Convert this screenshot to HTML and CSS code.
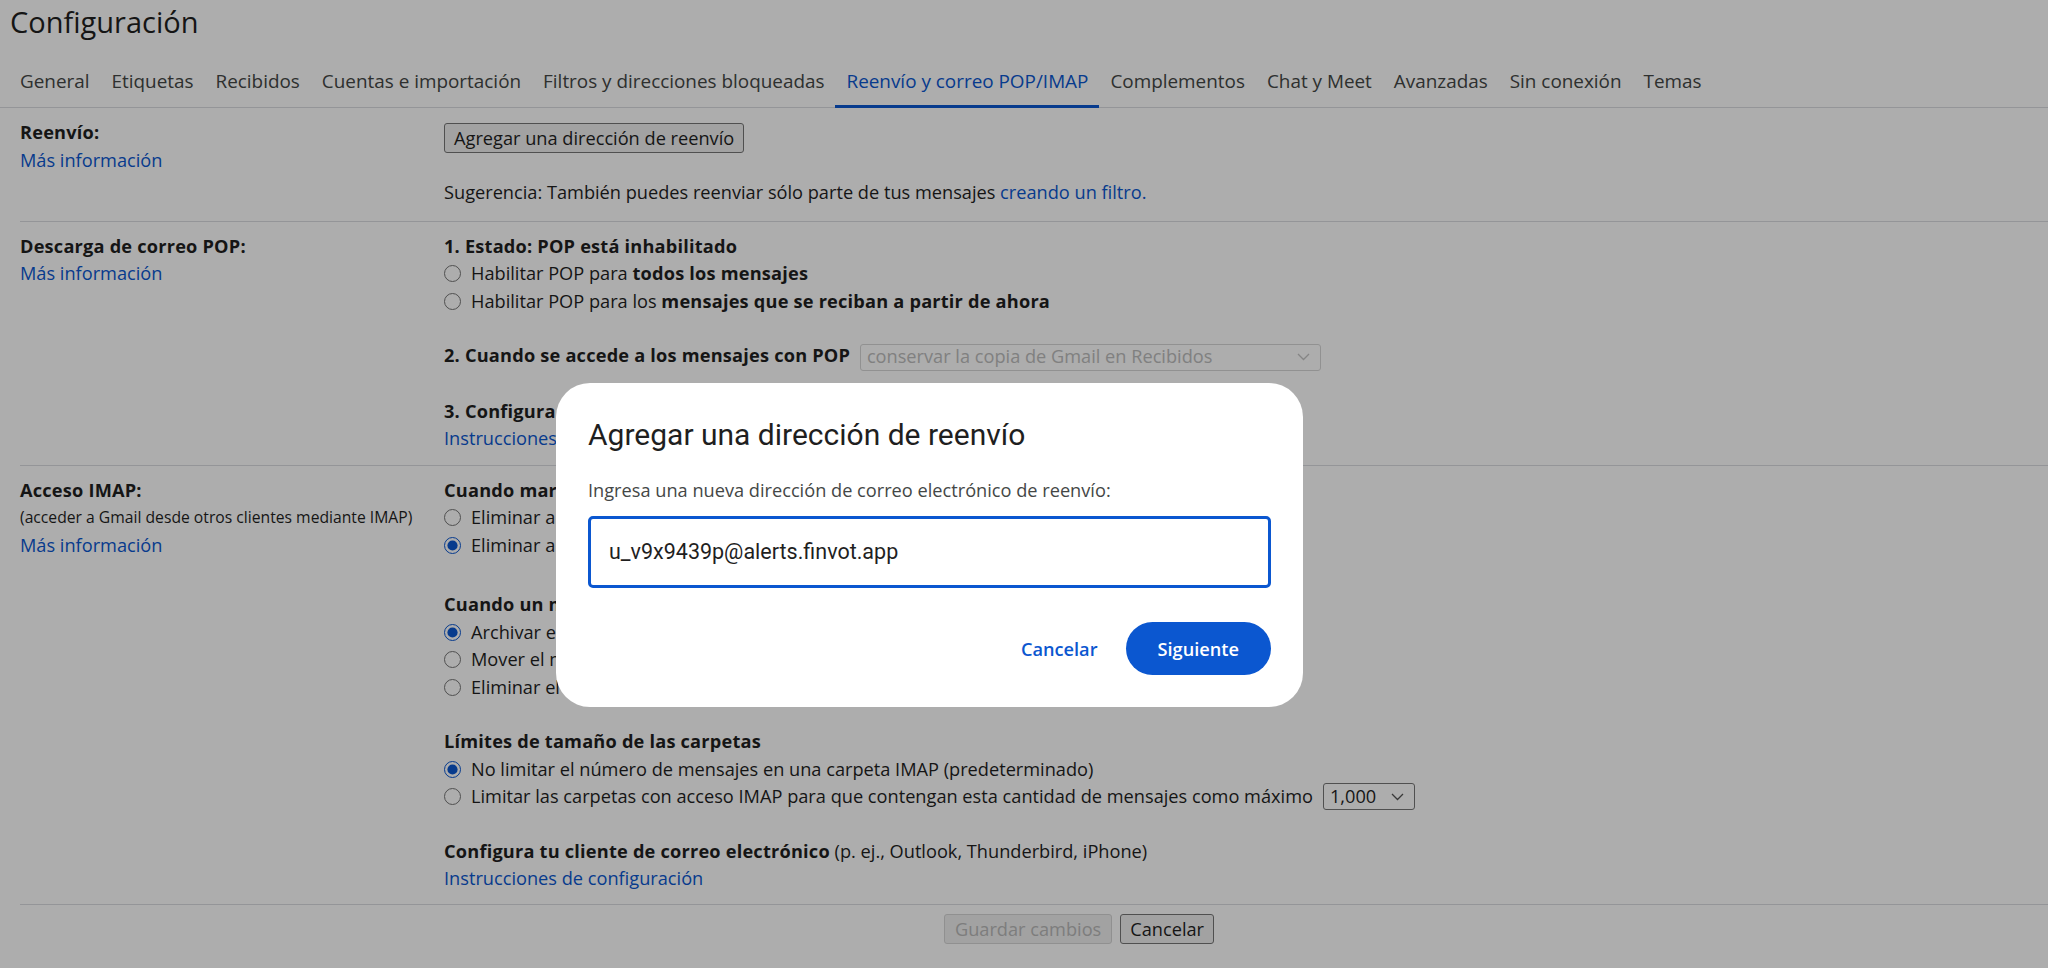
FILE: index.html
```html
<!DOCTYPE html>
<html lang="es">
<head>
    <meta charset="UTF-8">
    <meta name="viewport" content="width=device-width, initial-scale=1.0">
    <title>Configuración - Reenvío y correo POP/IMAP</title>
    <link rel="stylesheet" href="styles.css">
</head>
<body>
    <div class="page">
        <h1 class="title">Configuración</h1>

        <nav class="tabs">
            <a class="tab">General</a>
            <a class="tab">Etiquetas</a>
            <a class="tab">Recibidos</a>
            <a class="tab">Cuentas e importación</a>
            <a class="tab">Filtros y direcciones bloqueadas</a>
            <a class="tab active">Reenvío y correo POP/IMAP</a>
            <a class="tab">Complementos</a>
            <a class="tab">Chat y Meet</a>
            <a class="tab">Avanzadas</a>
            <a class="tab">Sin conexión</a>
            <a class="tab">Temas</a>
        </nav>

        <!-- Reenvio -->
        <div class="row">
            <div class="label">
                <div class="label-title">Reenvío:</div>
                <a class="link">Más información</a>
            </div>
            <div class="content">
                <div class="btn-line"><button class="btn">Agregar una dirección de reenvío</button></div>
                <div class="hint">Sugerencia: También puedes reenviar sólo parte de tus mensajes <a class="link">creando un filtro.</a></div>
            </div>
        </div>

        <!-- POP -->
        <div class="row pop">
            <div class="label">
                <div class="label-title">Descarga de correo POP:</div>
                <a class="link">Más información</a>
            </div>
            <div class="content">
                <div class="group">
                    <div class="heading">1. Estado: POP está inhabilitado</div>
                    <label class="opt"><input type="radio" name="pop">Habilitar POP para&nbsp;<b>todos los mensajes</b></label>
                    <label class="opt"><input type="radio" name="pop">Habilitar POP para los&nbsp;<b>mensajes que se reciban a partir de ahora</b></label>
                </div>
                <div class="group">
                    <span class="heading">2. Cuando se accede a los mensajes con POP</span>
                    <span class="select disabled">conservar la copia de Gmail en Recibidos
                        <svg class="chev" width="13" height="8" viewBox="0 0 13 8"><path d="M1 1l5.5 5.5L12 1" fill="none" stroke="currentColor" stroke-width="1.3"/></svg>
                    </span>
                </div>
                <div class="group">
                    <div><span class="heading">3. Configura tu cliente de correo</span> (p. ej., Outlook, Eudora)</div>
                    <a class="link">Instrucciones de configuración</a>
                </div>
            </div>
        </div>

        <!-- IMAP -->
        <div class="row imap">
            <div class="label">
                <div class="label-title">Acceso IMAP:</div>
                <div class="small">(acceder a Gmail desde otros clientes mediante IMAP)</div>
                <a class="link">Más información</a>
            </div>
            <div class="content">
                <div class="group">
                    <div class="heading">Cuando marco un mensaje como eliminado en IMAP:</div>
                    <label class="opt"><input type="radio" name="exp">Eliminar automáticamente desactivado: esperar al cliente</label>
                    <label class="opt"><input type="radio" name="exp" checked>Eliminar automáticamente activado: actualizar el servidor</label>
                </div>
                <div class="group wide-gap">
                    <div class="heading">Cuando un mensaje se marca como eliminado en IMAP:</div>
                    <label class="opt"><input type="radio" name="del" checked>Archivar el mensaje (predeterminado)</label>
                    <label class="opt"><input type="radio" name="del">Mover el mensaje a la papelera</label>
                    <label class="opt"><input type="radio" name="del">Eliminar el mensaje definitivamente</label>
                </div>
                <div class="group">
                    <div class="heading">Límites de tamaño de las carpetas</div>
                    <label class="opt"><input type="radio" name="lim" checked>No limitar el número de mensajes en una carpeta IMAP (predeterminado)</label>
                    <label class="opt"><input type="radio" name="lim">Limitar las carpetas con acceso IMAP para que contengan esta cantidad de mensajes como máximo
                        <span class="select small-select">1,000
                            <svg class="chev" width="13" height="8" viewBox="0 0 13 8"><path d="M1 1l5.5 5.5L12 1" fill="none" stroke="currentColor" stroke-width="1.3"/></svg>
                        </span>
                    </label>
                </div>
                <div class="group">
                    <div><span class="heading">Configura tu cliente de correo electrónico</span> (p. ej., Outlook, Thunderbird, iPhone)</div>
                    <a class="link">Instrucciones de configuración</a>
                </div>
            </div>
        </div>

        <div class="footer">
            <button class="btn" disabled>Guardar cambios</button>
            <button class="btn">Cancelar</button>
        </div>
    </div>

    <div class="scrim"></div>

    <div class="dialog">
        <h2 class="dialog-title">Agregar una dirección de reenvío</h2>
        <p class="dialog-text">Ingresa una nueva dirección de correo electrónico de reenvío:</p>
        <div class="field">u_v9x9439p@alerts.finvot.app</div>
        <div class="dialog-actions">
            <button class="text-btn">Cancelar</button>
            <button class="filled-btn">Siguiente</button>
        </div>
    </div>
</body>
</html>
```

FILE: styles.css
```css
body {
    margin: 0;
    background: #fff;
    color: #1f1f1f;
    font-family: "Open Sans", Roboto, "Liberation Sans", sans-serif;
    font-size: 18.2px;
    line-height: 27.5px;
}

.title {
    margin: 0;
    padding: 4px 0 0 10px;
    font-size: 29px;
    line-height: 36px;
    font-weight: 400;
}

.tabs {
    display: flex;
    margin-top: 20px;
    padding-left: 9px;
    border-bottom: 1px solid #dadce0;
}

.tab {
    padding: 9px 11px 12px;
    font-size: 18.9px;
    line-height: 24px;
    color: #444746;
    border-bottom: 3px solid transparent;
    margin-bottom: -1px;
}

.tab.active {
    color: #0b57d0;
    border-bottom-color: #0b57d0;
}

.link {
    color: #0b57d0;
}

.row {
    display: flex;
    margin-left: 20px;
    padding: 11px 0 14px;
    border-bottom: 1px solid #dadce0;
}

.row.pop {
    padding-bottom: 12px;
}

.row.imap {
    padding-bottom: 11px;
}

.label {
    width: 424px;
    flex: none;
}

.label-title,
.heading,
b {
    font-weight: 700;
    letter-spacing: 0.2px;
}

.label .link {
    display: block;
}

.small {
    font-size: 15.7px;
}

.content {
    display: flex;
    flex-direction: column;
}

.btn-line {
    margin-top: 4px;
    line-height: 0;
}

.hint {
    margin-top: 26px;
}

.group + .group {
    margin-top: 27px;
}

.group.wide-gap {
    margin-top: 32px;
}

.group .link {
    display: block;
}

.opt {
    display: flex;
    align-items: center;
}

.opt input {
    width: 17px;
    height: 17px;
    margin: 0 10px 0 0;
    accent-color: #0b57d0;
}

.btn {
    height: 30px;
    padding: 0 9px;
    font-family: inherit;
    font-size: 18.2px;
    color: #1f1f1f;
    background: #efefef;
    border: 1px solid #767676;
    border-radius: 3px;
}

.btn:disabled {
    padding: 0 10px;
    color: #b9b9b9;
    border-color: #d4d4d4;
}

.select {
    display: inline-flex;
    align-items: center;
    justify-content: space-between;
    box-sizing: border-box;
    height: 27px;
    border-radius: 3px;
    vertical-align: middle;
}

.select.disabled {
    width: 461px;
    margin-left: 5px;
    padding: 0 10px 0 6px;
    color: #bdbdbd;
    border: 1px solid #d6d6d6;
}

.select.disabled .chev {
    color: #c4c4c4;
}

.small-select {
    width: 92px;
    margin-left: 10px;
    padding: 0 10px 0 6px;
    border: 1px solid #767676;
}

.small-select .chev {
    color: #555;
}

.footer {
    display: flex;
    justify-content: center;
    gap: 8px;
    padding: 9px 0 0 110px;
}

.scrim {
    position: fixed;
    inset: 0;
    background: rgba(0, 0, 0, 0.32);
}

.dialog {
    position: fixed;
    left: 556px;
    top: 383px;
    width: 747px;
    box-sizing: border-box;
    padding: 32px;
    background: #fff;
    border-radius: 34px;
}

.dialog-title {
    margin: 0;
    font-family: Roboto, "Open Sans", sans-serif;
    font-size: 30px;
    line-height: 40px;
    font-weight: 400;
    color: #1f1f1f;
}

.dialog-text {
    margin: 23px 0 0;
    line-height: 25px;
    color: #444746;
}

.field {
    display: flex;
    align-items: center;
    box-sizing: border-box;
    height: 72px;
    margin-top: 13px;
    padding: 0 18px;
    border: 3px solid #0b57d0;
    border-radius: 5px;
    font-family: Roboto, "Open Sans", sans-serif;
    font-size: 21.5px;
    color: #1f1f1f;
}

.dialog-actions {
    display: flex;
    justify-content: flex-end;
    gap: 8px;
    margin-top: 34px;
}

.text-btn,
.filled-btn {
    height: 53px;
    border: 0;
    font-family: inherit;
    font-size: 18.2px;
    font-weight: 600;
}

.text-btn {
    padding: 0 20px;
    background: none;
    color: #0b57d0;
}

.filled-btn {
    padding: 0 32px;
    border-radius: 27px;
    background: #0b57d0;
    color: #fff;
}
```
